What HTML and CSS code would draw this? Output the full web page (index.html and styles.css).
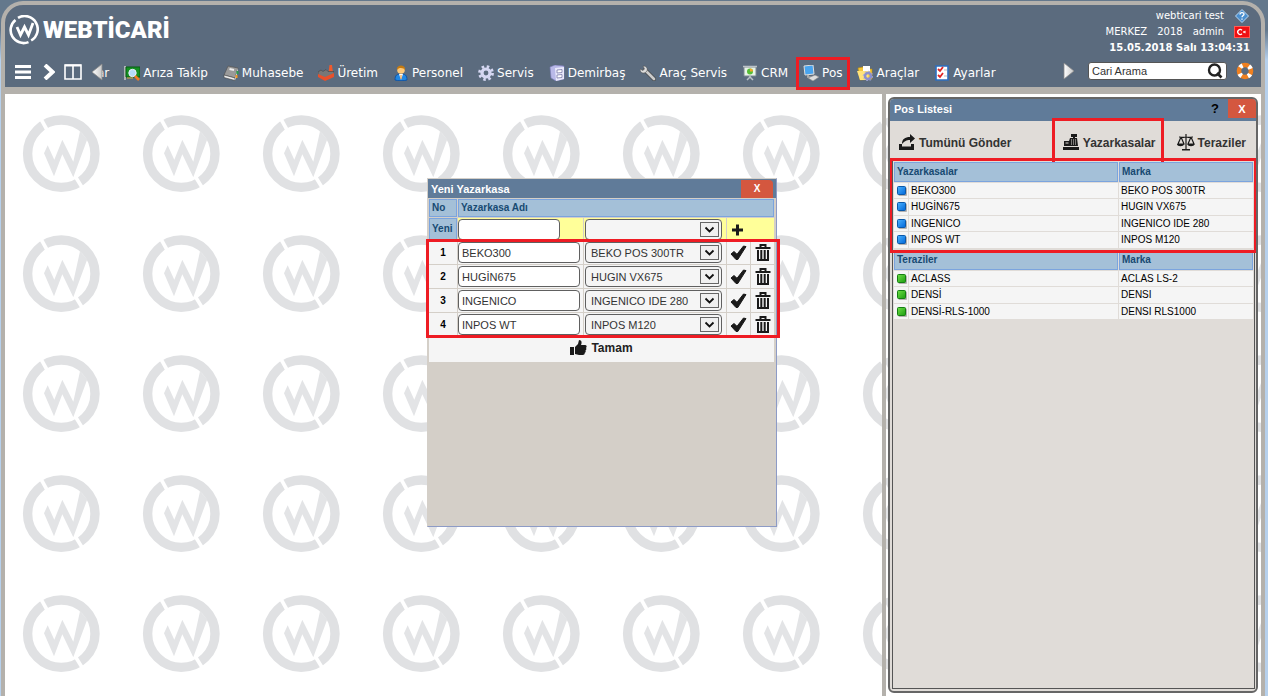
FILE: index.html
```html
<!DOCTYPE html>
<html lang="tr">
<head>
<meta charset="utf-8">
<title>Webticari</title>
<link rel="stylesheet" href="styles.css">
</head>
<body>
<svg class="defs" aria-hidden="true">
  <defs>
    <linearGradient id="arrow" x1="0" x2="1"><stop offset="0" stop-color="#fff"/><stop offset="1" stop-color="#c8c8c8"/></linearGradient>
    <linearGradient id="blue" x1="0" y1="0" x2="1" y2="1"><stop offset="0" stop-color="#4cb4ff"/><stop offset="1" stop-color="#0065d8"/></linearGradient>
    <linearGradient id="green" x1="0" y1="0" x2="1" y2="1"><stop offset="0" stop-color="#70e048"/><stop offset="1" stop-color="#1c9c10"/></linearGradient>
    <symbol id="i-check" viewBox="0 0 17 17"><path d="M1 10l3-2.500 3 2.800L13.500 2l2.500 .6L7.800 15.500H6z" fill="#1a1a1a" stroke="#1a1a1a"/></symbol>
    <symbol id="i-trash" viewBox="0 0 16 17"><path d="M5.500 3V1h5v2M.500 4h15" fill="none" stroke="#1a1a1a" stroke-width="2"/><path d="M3 6v10h10V6M6.300 6v10M9.700 6v10" fill="none" stroke="#1a1a1a" stroke-width="2"/></symbol>
    <symbol id="i-blue" viewBox="0 0 10 10"><rect x="1.500" y="1.500" width="8.500" height="8.500" rx="1" fill="#b5b2b0"/><rect x=".5" y=".5" width="8" height="8" rx="1" fill="url(#blue)" stroke="#0b58a8"/></symbol>
    <symbol id="i-green" viewBox="0 0 10 10"><rect x="1.500" y="1.500" width="8.500" height="8.500" rx="1" fill="#b5b2b0"/><rect x=".5" y=".5" width="8" height="8" rx="1" fill="url(#green)" stroke="#157f12"/></symbol>
  </defs>
</svg>
<div class="window">
  <header class="header">
    <div class="top">
      <a class="logo" href="#">
        <svg width="30" height="30" viewBox="0 0 30 30" fill="none" stroke="#fff"><path d="M9 2.800A13 13 0 0 1 22.200 25.500M19.500 27.100A13 13 0 0 1 6.500 4.900" stroke-width="2.600"/><path d="M8 12l3.500 8 4-8 4 8L24 8" stroke-width="2.800"/></svg>
        <span>WEBTİCARİ</span>
      </a>
      <div class="info">
        <div class="info-line"><span>webticari test</span><a href="#" aria-label="Yardım"><svg width="16" height="14" viewBox="0 0 16 14"><path d="M8 .5L14.500 7 8 13.500 1.500 7z" fill="#4a8fd0" stroke="#b8d8f4"/><path d="M6 5.500c0-2.500 4-2.500 4-.3C10 6.500 8 6.500 8 8.300M8 9.500v1.300" fill="none" stroke="#fff" stroke-width="1.300"/></svg></a></div>
        <div class="info-line"><span>MERKEZ</span><span>2018</span><span>admin</span><a href="#" aria-label="Türkçe"><svg width="16" height="12" viewBox="0 0 16 12"><rect x=".5" y=".5" width="15" height="11" fill="#f00f12" stroke="#ff5a52"/><path d="M8 4.200A2.500 2.500 0 1 0 8 7.800" fill="none" stroke="#fff" stroke-width="1.300"/><path d="M9 6l2.500-1-.8 1 .8 1z" fill="#fff" stroke="#fff" stroke-width=".6"/></svg></a></div>
        <time class="clock">15.05.2018 Salı 13:04:31</time>
      </div>
    </div>
    <div class="bar">
      <div class="tools">
        <button aria-label="Menü"><svg width="16" height="14" viewBox="0 0 16 14"><path d="M0 1.500h16M0 7h16M0 12.500h16" stroke="#fff" stroke-width="3"/></svg></button>
        <button aria-label="İleri"><svg width="12" height="16" viewBox="0 0 12 16"><path d="M2 1l7.500 7L2 15" fill="none" stroke="#fff" stroke-width="4"/></svg></button>
        <button aria-label="Bölmeler"><svg width="18" height="16" viewBox="0 0 18 16"><path d="M1 1h16v14H1zM9 1v14" fill="none" stroke="#fff" stroke-width="1.600"/><path d="M1 1.500h16" stroke="#fff" stroke-width="2"/></svg></button>
        <button class="scroll-left" aria-label="Sola kaydır"><svg width="12" height="18" viewBox="0 0 12 18"><path d="M11 1v16L1 9z" fill="url(#arrow)" stroke="#888" stroke-width=".8"/></svg></button>
      </div>
      <nav class="menu">
        <a class="cut" href="#">ar</a>
        <a href="#"><svg viewBox="0 0 16 16"><path d="M1 1v14" stroke="#ccc" stroke-width="1.500"/><path d="M2 2h14v10H2z" fill="#149022" stroke="#075c12"/><path d="M4 12v2M6 12v2M8 12v2" stroke="#d7b73b"/><circle cx="8.500" cy="8" r="3.700" fill="#b5dcf8" stroke="#eef"/><path d="M11 11l4 4" stroke="#f07a24" stroke-width="2.500"/></svg>Arıza Takip</a>
        <a href="#"><svg viewBox="0 0 16 16"><path d="M5 1l10 2-3 10-11-3z" fill="#9a9a9a" stroke="#555" stroke-width=".7"/><path d="M1 10l11 3v2.500L1 12.500z" fill="#eee" stroke="#444" stroke-width=".6"/><path d="M12 13l3-10v3l-3 9.500z" fill="#ddd"/><path d="M6.500 4l4.500 1" stroke="#eee" stroke-width="2"/><path d="M14.500 6v3" stroke="#29a04a" stroke-width="2"/><path d="M13.500 10v3" stroke="#f49a20" stroke-width="2"/></svg>Muhasebe</a>
        <a href="#"><svg viewBox="0 0 16 16"><path d="M11.500 0H14l1 8h-4.500z" fill="#f05a2c"/><path d="M0 7l3-2 2 1.500L8 4.500l2 2h6v4l-8 4-8-4z" fill="#777" stroke="#444" stroke-width=".6"/><path d="M0 9l7 3v4l-7-4zM7 12l9-4v4l-9 4z" fill="#e8502b"/></svg>Üretim</a>
        <a href="#"><svg viewBox="0 0 16 16"><path d="M2 15c0-5 2-6 6-6s6 1 6 6c-3 1-9 1-12 0z" fill="#2287e2" stroke="#0f55a8"/><path d="M6 9l2 6 2-6z" fill="#fff"/><circle cx="8" cy="5" r="3.800" fill="#ffc978"/><path d="M4 5c-1-6 9-6 8 0-1-2-6-3-8 0z" fill="#c57a10"/><path d="M8 10v4" stroke="#e88a20"/></svg>Personel</a>
        <a href="#"><svg viewBox="0 0 16 16"><circle cx="8" cy="8" r="6.500" fill="none" stroke="#d5d7f2" stroke-width="2.800" stroke-dasharray="2.500 2.600"/><circle cx="8" cy="8" r="4" fill="none" stroke="#d5d7f2" stroke-width="3.200"/></svg>Servis</a>
        <a href="#"><svg viewBox="0 0 16 16"><path d="M1 2l5-2 9 1v13l-8 2-5-3z" fill="#b9b9e8" stroke="#7a7ab8" stroke-width=".6"/><path d="M6 3l9-1v12l-8 2z" fill="#e9e9fb"/><path d="M8 5l5-.5v3L8 8zM8 10l5-.5v3l-5 .5z" fill="#fff" stroke="#7878a8" stroke-width=".8"/></svg>Demirbaş</a>
        <a href="#"><svg viewBox="0 0 16 16"><path d="M5 5l9 9" stroke="#444" stroke-width="4" stroke-linecap="round"/><path d="M5 5l9 9" stroke="#ccc" stroke-width="2.800" stroke-linecap="round"/><path d="M3 1l1.500 3L3 5.500 0 4c0 5 5 5 7 2 1-3-1-5-4-5z" fill="#ddd" stroke="#555" stroke-width=".6"/></svg>Araç Servis</a>
        <a href="#"><svg viewBox="0 0 16 16"><path d="M2 2h12v9H2z" fill="#e8f4e8" stroke="#7e8891"/><path d="M1 1.500h14M8 11v2M5 15l3-3 3 3" stroke="#bbc2c8" stroke-width="1.500" fill="none"/><circle cx="8" cy="6.500" r="3" fill="#57bd37"/><path d="M8 6.500v-3a3 3 0 0 1 3 3z" fill="#f1a829"/></svg>CRM</a>
        <a class="marked" href="#"><svg viewBox="0 0 16 16"><path d="M1 1l9-1 1 9-9 1z" fill="#48a4ef" stroke="#ddd"/><path d="M5 10v2l5 1" stroke="#aaa" stroke-width="2" fill="none"/><path d="M5 13l7-3 4 2-6 4z" fill="#ddd" stroke="#888" stroke-width=".6"/></svg><span>Pos</span></a>
        <a href="#"><svg viewBox="0 0 16 16"><path d="M1 3l5-1 1 2h8v10l-12 1z" fill="#f5c637" stroke="#b98b13" stroke-width=".6"/><path d="M6 1h7v5H6z" fill="#fff"/><path d="M0 6h12l-1 9H3z" fill="#ffe27a"/><circle cx="11" cy="11" r="3" fill="none" stroke="#8a8fd0" stroke-width="2.500"/><circle cx="11" cy="11" r="4.700" fill="none" stroke="#a7abdf" stroke-dasharray="1.800 1.800"/></svg>Araçlar</a>
        <a href="#"><svg viewBox="0 0 16 16"><path d="M2 1h12v14H2z" fill="#fff" stroke="#2d6fc0" stroke-width="1.600"/><path d="M4 4l2 2 3-4M4 10l2 2 3-4" fill="none" stroke="#e02424" stroke-width="1.800"/><path d="M10 5h3M10 11h3" stroke="#bbb"/></svg>Ayarlar</a>
      </nav>
      <button aria-label="Sağa kaydır"><svg width="12" height="18" viewBox="0 0 12 18"><path d="M1 1v16L11 9z" fill="url(#arrow)" stroke="#888" stroke-width=".8"/></svg></button>
      <div class="search">
        <input type="text" aria-label="Cari Arama" value="Cari Arama">
        <button aria-label="Ara"><svg width="16" height="16" viewBox="0 0 16 16"><circle cx="7.500" cy="7" r="5.500" fill="none" stroke="#222" stroke-width="2.400"/><path d="M10 10l4.500 4.500" stroke="#222" stroke-width="2.600"/></svg></button>
      </div>
      <button aria-label="Destek"><svg width="18" height="18" viewBox="0 0 18 18"><circle cx="9" cy="9" r="6" fill="none" stroke="#f08020" stroke-width="4.600"/><circle cx="9" cy="9" r="6" fill="none" stroke="#fff" stroke-width="4.600" stroke-dasharray="3 6.425" stroke-dashoffset="-3.200"/></svg></button>
    </div>
  </header>
  <div class="content">
    <main class="desk">
      <section class="dialog" aria-label="Yeni Yazarkasa">
        <div class="dialog-title"><h2>Yeni Yazarkasa</h2><button class="close" aria-label="Kapat">X</button></div>
        <div class="dialog-body">
          <table class="edit">
            <colgroup><col class="c-no"><col class="c-name"><col class="c-brand"><col class="c-act"><col class="c-act"></colgroup>
            <thead>
              <tr class="head"><th>No</th><th colspan="4">Yazarkasa Adı</th></tr>
              <tr class="new"><th>Yeni</th><td><input class="short" type="text" aria-label="Yeni yazarkasa adı"></td><td><select aria-label="Yeni marka"><option></option></select></td><td colspan="2"><button aria-label="Ekle"><svg width="21" height="17" viewBox="0 0 21 17"><path d="M10.500 3.500v11M5 9h11" stroke="#1a1a1a" stroke-width="3"/></svg></button></td></tr>
            </thead>
            <tbody>
              <tr><td class="num">1</td><td><input type="text" aria-label="Ad 1" value="BEKO300"></td><td><select aria-label="Marka 1"><option>BEKO POS 300TR</option></select></td><td><button aria-label="Kaydet"><svg width="17" height="17"><use href="#i-check"/></svg></button></td><td><button aria-label="Sil"><svg width="16" height="17"><use href="#i-trash"/></svg></button></td></tr>
              <tr><td class="num">2</td><td><input type="text" aria-label="Ad 2" value="HUGİN675"></td><td><select aria-label="Marka 2"><option>HUGIN VX675</option></select></td><td><button aria-label="Kaydet"><svg width="17" height="17"><use href="#i-check"/></svg></button></td><td><button aria-label="Sil"><svg width="16" height="17"><use href="#i-trash"/></svg></button></td></tr>
              <tr><td class="num">3</td><td><input type="text" aria-label="Ad 3" value="INGENICO"></td><td><select aria-label="Marka 3"><option>INGENICO IDE 280</option></select></td><td><button aria-label="Kaydet"><svg width="17" height="17"><use href="#i-check"/></svg></button></td><td><button aria-label="Sil"><svg width="16" height="17"><use href="#i-trash"/></svg></button></td></tr>
              <tr><td class="num">4</td><td><input type="text" aria-label="Ad 4" value="INPOS WT"></td><td><select aria-label="Marka 4"><option>INPOS M120</option></select></td><td><button aria-label="Kaydet"><svg width="17" height="17"><use href="#i-check"/></svg></button></td><td><button aria-label="Sil"><svg width="16" height="17"><use href="#i-trash"/></svg></button></td></tr>
            </tbody>
          </table>
          <div class="mark mark-rows"></div>
          <div class="ok-row"><button><svg width="17" height="16" viewBox="0 0 17 16"><path d="M0 7h4v8H0z" fill="#1a1a1a"/><path d="M5 7l3-3 1-4c3 0 3 3 2 5h4c2 0 2 2 1 3 1 1 0 2-.5 2.500.5 1 0 2-.7 2.200 0 1.300-.8 2.300-2 2.300H9l-4-1z" fill="#1a1a1a"/></svg>Tamam</button></div>
        </div>
      </section>
    </main>
    <aside class="side">
      <section class="panel">
        <div class="panel-title"><h2>Pos Listesi</h2><button class="help" aria-label="Yardım">?</button><button class="close" aria-label="Kapat">X</button></div>
        <div class="tabs">
          <button class="send"><svg width="18" height="17" viewBox="0 0 18 17"><path d="M1 10v6h15v-6h-3v2.500H4V10z" fill="#1a1a1a"/><path d="M4 10c0-5 3-7 8-7V0l5 4.500L12 9V6c-4 0-5 1-8 4z" fill="#1a1a1a"/></svg>Tumünü Gönder</button>
          <button class="active"><svg width="18" height="17" viewBox="0 0 18 17"><path d="M9 0h6v3h-2v1h2l1 8H2V7h5l1-3h3V3H9zM1 13h16v3H1z" fill="#1a1a1a"/><path d="M9 6h1m1 0h1m1 0h1M9 8h1m1 0h1m1 0h1M9 10h1m1 0h1m1 0h1M3.500 9h3" stroke="#e0dcd8" stroke-width="1"/></svg>Yazarkasalar<span class="mark mark-tab"></span></button>
          <button><svg width="18" height="17" viewBox="0 0 18 17"><path d="M9 0v15M2 3c3 0 4 1 7 0 3 1 4 0 7 0M4 3l-3 7h6L4 3M14 3l-3 7h6l-3-7" fill="none" stroke="#1a1a1a" stroke-width="1.200"/><path d="M0 10h7c0 3-7 3-7 0zM10.500 10h7c0 3-7 3-7 0zM5 15h8v1.500H5z" fill="#1a1a1a"/></svg>Teraziler</button>
        </div>
        <div class="lists">
          <table>
            <colgroup><col class="c-icon"><col><col class="c-marka"></colgroup>
            <thead><tr><th colspan="2">Yazarkasalar</th><th>Marka</th></tr></thead>
            <tbody>
              <tr><td class="dot"><svg width="10" height="10"><use href="#i-blue"/></svg></td><td>BEKO300</td><td>BEKO POS 300TR</td></tr>
              <tr><td class="dot"><svg width="10" height="10"><use href="#i-blue"/></svg></td><td>HUGİN675</td><td>HUGIN VX675</td></tr>
              <tr><td class="dot"><svg width="10" height="10"><use href="#i-blue"/></svg></td><td>INGENICO</td><td>INGENICO IDE 280</td></tr>
              <tr><td class="dot"><svg width="10" height="10"><use href="#i-blue"/></svg></td><td>INPOS WT</td><td>INPOS M120</td></tr>
            </tbody>
          </table>
          <table>
            <colgroup><col class="c-icon"><col><col class="c-marka"></colgroup>
            <thead><tr><th colspan="2">Teraziler</th><th>Marka</th></tr></thead>
            <tbody>
              <tr><td class="dot"><svg width="10" height="10"><use href="#i-green"/></svg></td><td>ACLASS</td><td>ACLAS LS-2</td></tr>
              <tr><td class="dot"><svg width="10" height="10"><use href="#i-green"/></svg></td><td>DENSİ</td><td>DENSI</td></tr>
              <tr><td class="dot"><svg width="10" height="10"><use href="#i-green"/></svg></td><td>DENSİ-RLS-1000</td><td>DENSI RLS1000</td></tr>
            </tbody>
          </table>
          <div class="mark mark-list"></div>
        </div>
      </section>
    </aside>
  </div>
</div>
</body>
</html>
```
FILE: styles.css
```css
* { box-sizing: border-box; }
body {
  margin: 0;
  background: linear-gradient(#64788c 0, #64788c 30px, #b6d0ec 60px);
  font: 11px/14px "Liberation Sans", Arial, sans-serif;
  color: #000;
}
button { border: 0; padding: 0; background: none; font: inherit; color: inherit; display: flex; align-items: center; }
svg { display: block; flex: none; }
a { color: inherit; text-decoration: none; }
h2 { margin: 0; font-size: 11px; font-weight: bold; }
.defs { position: absolute; width: 0; height: 0; }

.window {
  display: flex;
  flex-direction: column;
  height: 100vh;
  padding-top: 1px;
  margin: 0 3px 0 1px;
}
.header {
  border: 4px solid #b4b1ac;
  border-bottom-width: 7px;
  border-radius: 22px 22px 0 0;
  background: #5b6b7e;
  color: #fff;
}
.top { display: flex; justify-content: space-between; height: 52px; padding: 3px 11px 0 4px; }
.logo { display: flex; align-items: center; gap: 4px; height: 44px; font: 900 24px/30px Roboto, sans-serif; }
.info { display: flex; flex-direction: column; align-items: flex-end; font: 10px/16px "DejaVu Sans", Verdana, sans-serif; }
.info-line { display: flex; align-items: center; gap: 10px; height: 16px; }
.clock { font-weight: bold; }
.bar { display: flex; align-items: center; height: 30px; padding: 0 7px 2px 10px; }
.tools { display: flex; align-items: center; gap: 9px; padding-top: 2px; position: relative; z-index: 1; }
.tools button:first-child { margin-right: 3px; }
.menu {
  display: flex;
  align-items: center;
  flex: 1;
  gap: 15px;
  padding-top: 4px;
  font: 12px/16px "DejaVu Sans", Verdana, sans-serif;
}
.menu a { display: flex; align-items: center; gap: 3px; position: relative; white-space: nowrap; }
.menu a svg { width: 16px; height: 16px; }
.menu .cut { margin-left: -6px; }
.marked::after { content: ""; position: absolute; inset: -8px -8px -9px -7px; border: 3px solid #ee1c24; }
.search {
  display: flex;
  align-items: center;
  width: 139px;
  height: 18px;
  margin: 0 9px 0 13px;
  padding-right: 3px;
  background: #fff;
  border: 1px solid #555;
  border-radius: 3px;
}
.search input { flex: 1; min-width: 0; border: 0; padding: 0 3px; background: none; font: inherit; color: #333; }

.content {
  display: flex;
  flex: 1;
  min-height: 0;
  border: solid #b4b1ac;
  border-width: 0 4px;
  background: #fff url("data:image/svg+xml,%3Csvg xmlns='http://www.w3.org/2000/svg' width='120' height='120'%3E%3Ccircle cx='56.300' cy='59.700' r='33.700' fill='none' stroke='%23e0e1e3' stroke-width='9.400'/%3E%3Cpath d='M39 59.300l3.700-8 6.600 14.400 8-20 11 22L75 37.300l7.300 8-14 38-11-23-8.300 22z' fill='%23e3e4e6'/%3E%3Cpath d='M36.500 26l7 12.500M70 82l8 13' stroke='%23fff' stroke-width='3.600'/%3E%3C/svg%3E") 0 0 / 120px 120px;
}
.desk { flex: 1; position: relative; }
.side { display: flex; width: 379px; border-left: 4px solid #b4b1ac; padding: 3px 3px 3px 2px; }

.dialog {
  position: absolute;
  left: 422px;
  top: 84px;
  width: 350px;
  height: 349px;
  border: 1px solid #d4cfc8;
  border-right-color: #8d9bc6;
  border-bottom-color: #8d9bc6;
  background: #d4cfc8;
}
.dialog-title, .panel-title { display: flex; align-items: center; background: #607b99; color: #fff; }
.dialog-title { height: 19px; padding-left: 3px; }
.dialog-title h2, .panel-title h2 { flex: 1; }
.close { justify-content: center; background: #d4573f; color: #fff; font-weight: bold; }
.dialog-title .close { width: 32px; height: 18px; margin-right: 3px; border-radius: 0 4px 0 0; font-size: 10px; }
.dialog-body { position: relative; padding-right: 1px; }
.edit { width: 347px; table-layout: fixed; border-spacing: 1px; }
.c-no { width: 28px; }
.c-name { width: 125px; }
.c-brand { width: 142px; }
.c-act { width: 23px; }
td, th { padding: 0; }
th { padding-left: 2px; background: #a4c0d8; border: 1px solid #7ba4de; color: #174a72; font-size: 10px; line-height: 12px; text-align: left; }
.edit td { height: 23px; background: #f5f5f5; }
.edit .head th { height: 18px; }
.edit .new td { height: 22px; background: #ffff99; }
.edit .num { text-align: center; font-weight: bold; font-size: 10px; }
.edit input, .edit select {
  display: block;
  height: 21px;
  border: 1px solid #606060;
  border-radius: 4px;
  font: inherit;
  color: #333;
}
.edit input { width: 122px; padding: 0 3px; background: #fff; }
.edit .short { width: 102px; }
.edit select {
  width: 137px;
  margin-left: 1px;
  padding: 0 5px;
  appearance: none;
  background: #f5f5f5 url("data:image/svg+xml,%3Csvg xmlns='http://www.w3.org/2000/svg' width='19' height='15'%3E%3Crect x='.5' y='.5' width='18' height='14' fill='%23f0f0f0' stroke='%23666'/%3E%3Cpath d='M5.500 5.500l4 4 4-4' fill='none' stroke='%23111' stroke-width='1.800'/%3E%3C/svg%3E") right 2px center no-repeat;
}
.edit button { margin: 0 auto; }
.edit .new button { margin: 0; }
.ok-row { display: flex; justify-content: center; height: 25px; margin: 0 1px; padding-bottom: 4px; background: #f5f5f5; }
.ok-row button { gap: 4px; font-size: 12px; font-weight: bold; color: #222; }

.panel {
  display: flex;
  flex-direction: column;
  flex: 1;
  border: 2px solid #666;
  border-radius: 6px;
  background: #e0dcd8;
  overflow: hidden;
}
.panel-title { height: 22px; padding: 0 0 3px 4px; }
.panel-title .close { width: 28px; height: 19px; }
.help { margin-right: 9px; color: #000; font-size: 13px; font-weight: bold; }
.tabs { display: flex; align-items: center; height: 39px; padding: 4px 10px 0 8px; font-size: 12px; font-weight: bold; color: #333; }
.tabs button { gap: 3px; margin-left: 21px; position: relative; }
.tabs .send { margin: 0 auto 0 0; }
.lists { position: relative; flex: 1; margin: 0 1px 2px 2px; border: 1px solid #555; }
.lists table { width: 100%; table-layout: fixed; border-spacing: 1px; font-size: 10px; line-height: 12px; }
.c-icon { width: 14px; }
.c-marka { width: 134px; }
.lists th { height: 20px; }
.lists td { height: 15px; padding-left: 2px; background: #f5f5f5; }
.lists tr:nth-child(even) td { height: 16px; }
.lists .dot { padding-left: 3px; }

.mark { position: absolute; border: 3px solid #ee1c24; pointer-events: none; }
.mark-rows { top: 41px; left: -2px; right: -4px; height: 99px; }
.mark-tab { inset: -16px -8px -11px -10px; border-bottom: 0; }
.mark-list { top: -3px; left: -4px; right: -3px; height: 95px; }
```
